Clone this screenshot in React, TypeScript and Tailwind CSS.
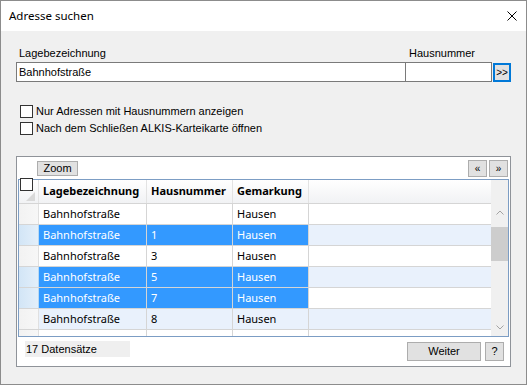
const rows = [
  { street: "Bahnhofstraße", nr: "", gem: "Hausen", sel: false },
  { street: "Bahnhofstraße", nr: "1", gem: "Hausen", sel: true },
  { street: "Bahnhofstraße", nr: "3", gem: "Hausen", sel: false },
  { street: "Bahnhofstraße", nr: "5", gem: "Hausen", sel: true },
  { street: "Bahnhofstraße", nr: "7", gem: "Hausen", sel: true },
  { street: "Bahnhofstraße", nr: "8", gem: "Hausen", sel: false },
  { street: "", nr: "", gem: "", sel: false },
];

function TitleBar() {
  return (
    <div className="h-[30px] bg-white flex items-center justify-between pl-[8px] pr-[9px] shrink-0">
      <span className="font-['Noto_Sans',sans-serif] text-[11.5px] text-black">Adresse suchen</span>
      <svg width="10" height="10" viewBox="0 0 10 10" className="block">
        <path d="M0.5 0.5 L9.5 9.5 M9.5 0.5 L0.5 9.5" stroke="#000" strokeWidth="1" />
      </svg>
    </div>
  );
}

function Checkbox({ label }: { label: string }) {
  return (
    <div className="flex items-center h-[17px] pl-[4px]">
      <div className="w-[13px] h-[13px] border border-[#333] bg-white shrink-0" />
      <span className="ml-[3px] text-[11px] text-black leading-[13px]">{label}</span>
    </div>
  );
}

function SmallButton({ children, cls }: { children: React.ReactNode; cls: string }) {
  return (
    <div className={"bg-[#e1e1e1] border border-[#adadad] flex items-center justify-center text-black " + cls}>
      {children}
    </div>
  );
}

function Chevron({ up }: { up: boolean }) {
  return (
    <svg width="8" height="5" viewBox="0 0 8 5" className="block">
      <path d={up ? "M0.5 4.5 L4 1 L7.5 4.5" : "M0.5 0.5 L4 4 L7.5 0.5"} stroke="#a3a3a3" strokeWidth="1" fill="none" />
    </svg>
  );
}

function GridHeader() {
  const head = "h-full flex items-center pl-[4px] border-r border-[#e3e3e3] font-bold";
  return (
    <div className="flex h-[24px] shrink-0">
      <div className="flex flex-1 border-b border-[#d5d5d5] bg-[linear-gradient(to_bottom,#ffffff,#f1f2f4)]">
        <div className="w-[20px] h-full relative border-r border-[#e3e3e3]">
          <svg width="10" height="10" viewBox="0 0 10 10" className="absolute right-[2px] bottom-[1px]">
            <polygon points="9,0 9,9 0,9" fill="#d9d9d9" />
          </svg>
        </div>
        <div className={"w-[108px] " + head}>Lagebezeichnung</div>
        <div className={"w-[86px] " + head}>Hausnummer</div>
        <div className={"w-[76px] " + head}>Gemarkung</div>
        <div className="flex-1" />
      </div>
      <div className="w-[17px] bg-[#f0f0f0]" />
    </div>
  );
}

function GridRow({ r, i }: { r: (typeof rows)[number]; i: number }) {
  const alt = i % 2 === 1;
  const base = alt ? "bg-[#e9f1fc]" : "bg-white";
  const cell = r.sel ? "bg-[#3399ff] text-white" : base + " text-black";
  const c = "h-full flex items-center pl-[4px] border-r border-[#d5d5d5] " + cell;
  return (
    <div className="flex h-[21px] shrink-0 border-b border-[#d5d5d5]">
      <div
        className={
          "w-[20px] h-full border-r " +
          (r.sel
            ? "bg-[linear-gradient(to_right,#d2e5f6,#e3effa)] border-[#b7d9f3]"
            : "bg-[linear-gradient(to_right,#f2f2f2,#f7f7f7)] border-[#e0e0e0]")
        }
      />
      <div className={"w-[108px] " + c}>{r.street}</div>
      <div className={"w-[86px] " + c}>{r.nr}</div>
      <div className={"w-[76px] " + c}>{r.gem}</div>
      <div className={"flex-1 h-full " + base} />
    </div>
  );
}

function Grid() {
  return (
    <div className="ml-[1px] w-[491px] h-[158px] border border-[#7c9dc4] flex flex-col overflow-hidden bg-white font-['Noto_Sans',sans-serif] text-[11px]">
      <GridHeader />
      <div className="flex flex-1 min-h-0">
        <div className="flex-1 flex flex-col overflow-hidden">
          {rows.map((r, i) => (
            <GridRow key={i} r={r} i={i} />
          ))}
        </div>
        <div className="w-[17px] bg-[#f0f0f0] flex flex-col">
          <div className="h-[17px] flex items-center justify-center">
            <Chevron up />
          </div>
          <div className="flex-1 pt-[6px]">
            <div className="h-[34px] bg-[#cdcdcd]" />
          </div>
          <div className="h-[17px] flex items-center justify-center">
            <Chevron up={false} />
          </div>
        </div>
      </div>
    </div>
  );
}

export default function App() {
  return (
    <div className="w-[527px] h-[385px] border border-[#8c8c8c] flex flex-col bg-[#f0f0f0] font-['Liberation_Sans',Arial,sans-serif] text-[11px] text-black">
      <TitleBar />
      <div className="flex-1 flex flex-col pl-[15px] pr-[15px] pt-[16px]">
        <div className="flex h-[13px] leading-[13px]">
          <span className="w-[390px] pl-[3px]">Lagebezeichnung</span>
          <span className="pl-[3px]">Hausnummer</span>
        </div>
        <div className="flex mt-[2px] h-[20px]">
          <div className="w-[390px] h-[20px] border border-[#7a7a7a] bg-white flex items-center pl-[2px]">Bahnhofstraße</div>
          <div className="w-[86px] h-[20px] border border-l-0 border-[#7a7a7a] bg-white" />
          <div className="ml-[1px] mt-[1px] w-[18px] h-[19px] border-2 border-[#0078d7] bg-[#e1e1e1] flex items-center justify-center text-[10px] leading-none">
            &gt;&gt;
          </div>
        </div>
        <div className="mt-[21px] flex flex-col">
          <Checkbox label="Nur Adressen mit Hausnummern anzeigen" />
          <Checkbox label="Nach dem Schließen ALKIS-Karteikarte öffnen" />
        </div>
        <div className="mt-[19px] w-[495px] border border-[#8f9399] bg-white flex flex-col relative pb-[5px]">
          <div className="flex items-center h-[22px] pt-[1px]">
            <SmallButton cls="ml-[20px] w-[41px] h-[15px] text-[11px]">Zoom</SmallButton>
            <div className="flex-1" />
            <SmallButton cls="w-[19px] h-[17px] text-[10px]">«</SmallButton>
            <SmallButton cls="ml-[2px] mr-[2px] w-[19px] h-[17px] text-[10px]">»</SmallButton>
          </div>
          <Grid />
          <div className="absolute left-[3px] top-[21px] w-[13px] h-[13px] border border-[#333] bg-white" />
          <div className="flex items-start mt-[4px]">
            <div className="ml-[8px] w-[105px] h-[16px] bg-[#efefef] flex items-center pl-[1px]">17 Datensätze</div>
            <div className="flex-1" />
            <SmallButton cls="mt-[1px] w-[74px] h-[19px]">Weiter</SmallButton>
            <SmallButton cls="mt-[1px] ml-[4px] mr-[6px] w-[19px] h-[19px]">?</SmallButton>
          </div>
        </div>
      </div>
    </div>
  );
}
